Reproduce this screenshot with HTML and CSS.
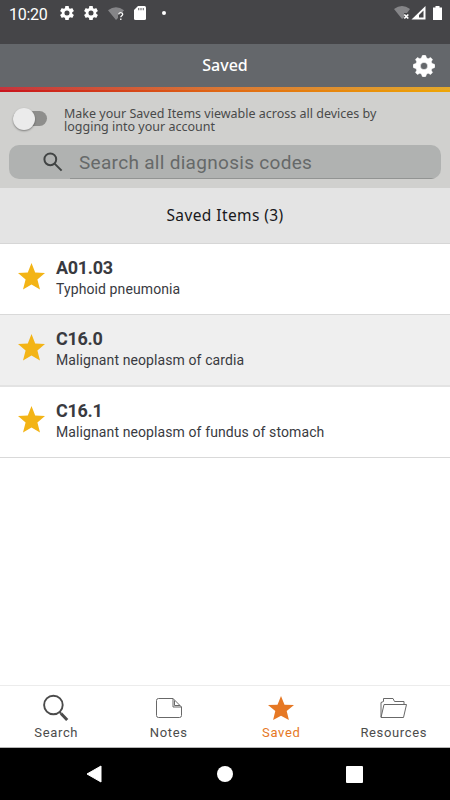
FILE: index.html
```html
<!DOCTYPE html>
<html lang="en">
<head>
<meta charset="utf-8">
<title>Saved</title>
<link rel="stylesheet" href="styles.css">
</head>
<body>
<svg width="0" height="0" class="defs">
  <symbol id="gear" viewBox="2 2 20 20"><path fill-rule="evenodd" d="M19.43 12.98c.04-.32.07-.64.07-.98s-.03-.66-.07-.98l2.11-1.65c.19-.15.24-.42.12-.64l-2-3.46c-.12-.22-.39-.3-.61-.22l-2.49 1c-.52-.4-1.08-.73-1.69-.98l-.38-2.65C14.46 2.18 14.25 2 14 2h-4c-.25 0-.46.18-.49.42l-.38 2.65c-.61.25-1.17.59-1.69.98l-2.49-1c-.23-.09-.49 0-.61.22l-2 3.46c-.13.22-.07.49.12.64l2.11 1.65c-.04.32-.07.65-.07.98s.03.66.07.98l-2.11 1.65c-.19.15-.24.42-.12.64l2 3.46c.12.22.39.3.61.22l2.49-1c.52.4 1.08.73 1.69.98l.38 2.65c.03.24.24.42.49.42h4c.25 0 .46-.18.49-.42l.38-2.65c.61-.25 1.17-.59 1.69-.98l2.49 1c.23.09.49 0 .61-.22l2-3.46c.12-.22.07-.49-.12-.64l-2.11-1.65zM12 15.6a3.6 3.6 0 1 1 0-7.2 3.6 3.6 0 0 1 0 7.2z"/></symbol>
  <symbol id="star" viewBox="0 0 27 27"><path d="M13.500 0l3.700 9.600 9.800.3-7.600 6.500 2.600 10.200-8.500-5.100L5 26.600l2.600-10.200L0 9.900l9.800-.3z"/></symbol>
</svg>
<div class="screen">
  <div class="status">
    <span class="time">10:20</span>
    <svg class="sgear" width="14" height="14"><use href="#gear"/></svg>
    <svg class="sgear second" width="14" height="14"><use href="#gear"/></svg>
    <svg class="wifi" width="17" height="14" viewBox="0 0 17 14"><path d="M0 3.200Q8 -2.500 16 3.200L14.500 5H11L10 7v4L8 13z" fill="#858588"/><path d="M10.600 7.400q.3-1.800 2.100-1.800t2 1.600c0 1.500-1.900 1.600-1.900 3.100M12.800 11.600v1.400" fill="none" stroke="#fff" stroke-width="1.300"/></svg>
    <svg class="sd" width="12" height="14" viewBox="0 0 12 14"><path d="M4 0h6.500Q12 0 12 1.500v11q0 1.500-1.500 1.500h-9Q0 14 0 12.500V4z" fill="#fff"/><path d="M4.700 2v2.200M7 2v2.200M9.300 2v2.200" stroke="#77777a" stroke-width="1.200"/></svg>
    <i class="dot"></i>
    <svg class="signals" width="50" height="16" viewBox="0 0 50 16"><path d="M0 4Q8 -2 16 4L13 8H10v4.500L8 14z" fill="#858588"/><path d="M10.300 9.500l4 4M14.300 9.500l-4 4" stroke="#fff" stroke-width="1.700"/><path d="M17.500 14.500L31.500 1v13.500z" fill="#fff"/><path d="M25 10L29.500 5.500v7h-4.500z" fill="#454548"/><path d="M39 2.500h2.500V1h4v1.500H48V15h-9z" fill="#fff"/></svg>
  </div>
  <header class="appbar"><h1>Saved</h1>
    <svg width="22" height="22" viewBox="0 0 22 22"><path fill-rule="evenodd" d="M9.300.5L11 0l1.700.5.900 2.500 1.600.7L17.600 2.500l1.900 1.900-1.200 2.400.7 1.600 2.500.9L22 11l-.5 1.700-2.500.9-.7 1.600 1.200 2.400-1.900 1.900-2.400-1.200-1.600.7-.9 2.500L11 22l-1.700-.5-.9-2.500-1.600-.7-2.400 1.200-1.900-1.900 1.200-2.400-.7-1.600-2.500-.9L0 11l.5-1.700L3 8.400l.7-1.600-1.200-2.400 1.900-1.900 2.400 1.200L8.400 3zM11 7.400a3.600 3.600 0 1 0 0 7.200 3.600 3.600 0 0 0 0-7.200z" stroke="#fff" stroke-width=".5" stroke-linejoin="round"/></svg>
  </header>
  <div class="rainbow"></div>
  <section class="tools">
    <div class="sync"><span class="toggle"></span><p>Make your Saved Items viewable across all devices by logging into your account</p></div>
    <div class="search">
      <svg width="20" height="20" viewBox="0 0 20 20"><circle cx="7.300" cy="7.300" r="5.900"/><path d="M11.600 11.600l7 7"/></svg>
      <div class="field">Search all diagnosis codes</div>
    </div>
  </section>
  <h2>Saved Items (3)</h2>
  <ul class="list">
    <li><svg width="27" height="27"><use href="#star"/></svg><div><b>A01.03</b><p>Typhoid pneumonia</p></div></li>
    <li><svg width="27" height="27"><use href="#star"/></svg><div><b>C16.0</b><p>Malignant neoplasm of cardia</p></div></li>
    <li><svg width="27" height="27"><use href="#star"/></svg><div><b>C16.1</b><p>Malignant neoplasm of fundus of stomach</p></div></li>
  </ul>
  <nav class="tabs">
    <a><svg width="28" height="28" viewBox="0 0 28 28" fill="none" stroke="#4b4b4b"><circle cx="11.400" cy="12" r="9.300" stroke-width="1.900"/><path d="M17.500 19l1.500 1.500" stroke-width="2"/><path d="M19 20.500l6.200 6.500" stroke-width="3"/></svg><span>Search</span></a>
    <a><svg width="28" height="28" viewBox="0 0 28 28" fill="none" stroke="#686868" stroke-width="1"><path d="M3.500 5.500H18l8.500 8.500v8.500q0 2-2 2h-21q-2 0-2-2v-15q0-2 2-2zM18 5.500V14h8.500M19.500 7.500v5H25"/></svg><span>Notes</span></a>
    <a class="active"><svg width="28" height="28" viewBox="0 0 28 28"><path d="M14 3l3.500 8.700 9.500.3-7.300 6.100 2.200 9L14 22.700 6.100 27.100l2.200-9L1 12l9.500-.3z"/></svg><span>Saved</span></a>
    <a><svg width="28" height="28" viewBox="0 0 28 28" fill="none" stroke="#686868" stroke-width="1"><path d="M1 24V9.500l2.500-1V5.500h9.500L14.500 8.500H24v2.700M1 24.500L4 11.500h22.500l-3 13z"/></svg><span>Resources</span></a>
  </nav>
  <div class="system">
    <svg width="16" height="18" viewBox="0 0 16 18"><path d="M15 1v16L1 9z" fill="#fff" stroke="#fff" stroke-linejoin="round"/></svg>
    <i class="home"></i><i class="recent"></i>
  </div>
</div>
</body>
</html>
```
FILE: styles.css
```css
* { box-sizing: border-box; }
body, h1, h2, p, ul { margin: 0; padding: 0; }
body { font-family: Roboto, sans-serif; background: #fff; }
.defs { position: absolute; }
.screen { width: 450px; height: 800px; display: flex; flex-direction: column; overflow: hidden; }
svg { display: block; flex: none; }
.status { height: 44px; flex: none; background: #454548; color: #fff; display: flex; align-items: flex-start; padding: 6px 6px 0 9px; }
.time { font-size: 16px; line-height: 17px; width: 51px; letter-spacing: -.3px; }
.sgear { fill: #fff; }
.second { margin-left: 10px; }
.wifi { margin-left: 10px; margin-top: 1px; }
.sd { margin-left: 9px; }
.dot { width: 4px; height: 4px; border-radius: 50%; background: #fff; margin: 5px 0 0 16px; }
.signals { margin-left: auto; margin-top: -1px; }
.appbar { height: 43px; flex: none; background: #64676b; display: grid; grid-template-columns: 54px 1fr 54px; align-items: center; color: #fff; }
.appbar h1 { grid-column: 2; text-align: center; font: 500 16px/22px "Noto Sans", sans-serif; margin-top: -1px; }
.appbar svg { margin-left: 17px; fill: #fff; }
.rainbow { height: 5px; flex: none; background: linear-gradient(rgba(190,180,180,.2) 0 70%, transparent 70%), linear-gradient(90deg, #c8141e, #e06914 50%, #eea606); }
.tools { height: 96px; flex: none; background: #d0d0ce; padding: 15px 9px 0; }
.sync { display: flex; height: 38px; }
.sync p { font: 12.500px/13px "Noto Sans", sans-serif; color: #494a4a; margin-left: 17px; width: 330px; }
.toggle { width: 34px; height: 15px; flex: none; margin: 4px 0 0 4px; border-radius: 8px; background: #8e8e8c; display: flex; align-items: center; }
.toggle::before { content: ""; flex: none; width: 22px; height: 22px; border-radius: 50%; background: #ebebeb; box-shadow: 0 1px 2px #0006; }
.search { height: 34px; border-radius: 10px; background: #b0b2b1; display: flex; padding-left: 34px; overflow: hidden; }
.search svg { margin-top: 7px; fill: none; stroke: #414444; stroke-width: 2; }
.field { height: 34px; border-bottom: 1px solid #929493; margin-left: 7px; flex: 1; padding-left: 9px; font-size: 19px; line-height: 35px; letter-spacing: .3px; color: #666969; }
h2 { height: 56px; flex: none; border-bottom: 1px solid #d6d6d6; background: #e4e4e4; font: 400 15.500px/54px "Noto Sans", sans-serif; letter-spacing: .4px; color: #18181b; text-align: center; }
.list { list-style: none; flex: 1; }
.list li { height: 71.300px; border-bottom: 2px solid #e3e3e3; display: flex; padding: 19px 0 0 18px; color: #393a3f; }
.list li:nth-child(2) { background: #efefef; }
.list li:nth-child(1), .list li:nth-child(3) { border-bottom: 1px solid #d9d9d9; }
.list svg { fill: #f3b416; }
.list div { margin: -5px 0 0 11px; }
.list b { display: block; font-size: 18px; line-height: 20px; font-weight: 700; letter-spacing: -.3px; }
.list p { font-size: 14px; line-height: 20px; margin-top: 1px; letter-spacing: .1px; }
.tabs { height: 63px; flex: none; border-top: 1px solid #ececec; border-bottom: 1px solid #b5b5b5; display: grid; grid-template-columns: repeat(4, 1fr); }
.tabs a { display: flex; flex-direction: column; align-items: center; padding-top: 7px; color: #4c4c4c; font-size: 13px; line-height: 16px; letter-spacing: .65px; }
.tabs span { margin-top: 4px; }
.tabs .active { color: #e67824; }
.active svg { fill: #e67824; }
.system { height: 52px; flex: none; background: #000; display: flex; align-items: center; padding-left: 86px; }
.home { width: 16px; height: 16px; border-radius: 50%; background: #fff; margin-left: 115px; }
.recent { width: 17px; height: 17px; border-radius: 1px; background: #fff; margin-left: 113px; }
```
